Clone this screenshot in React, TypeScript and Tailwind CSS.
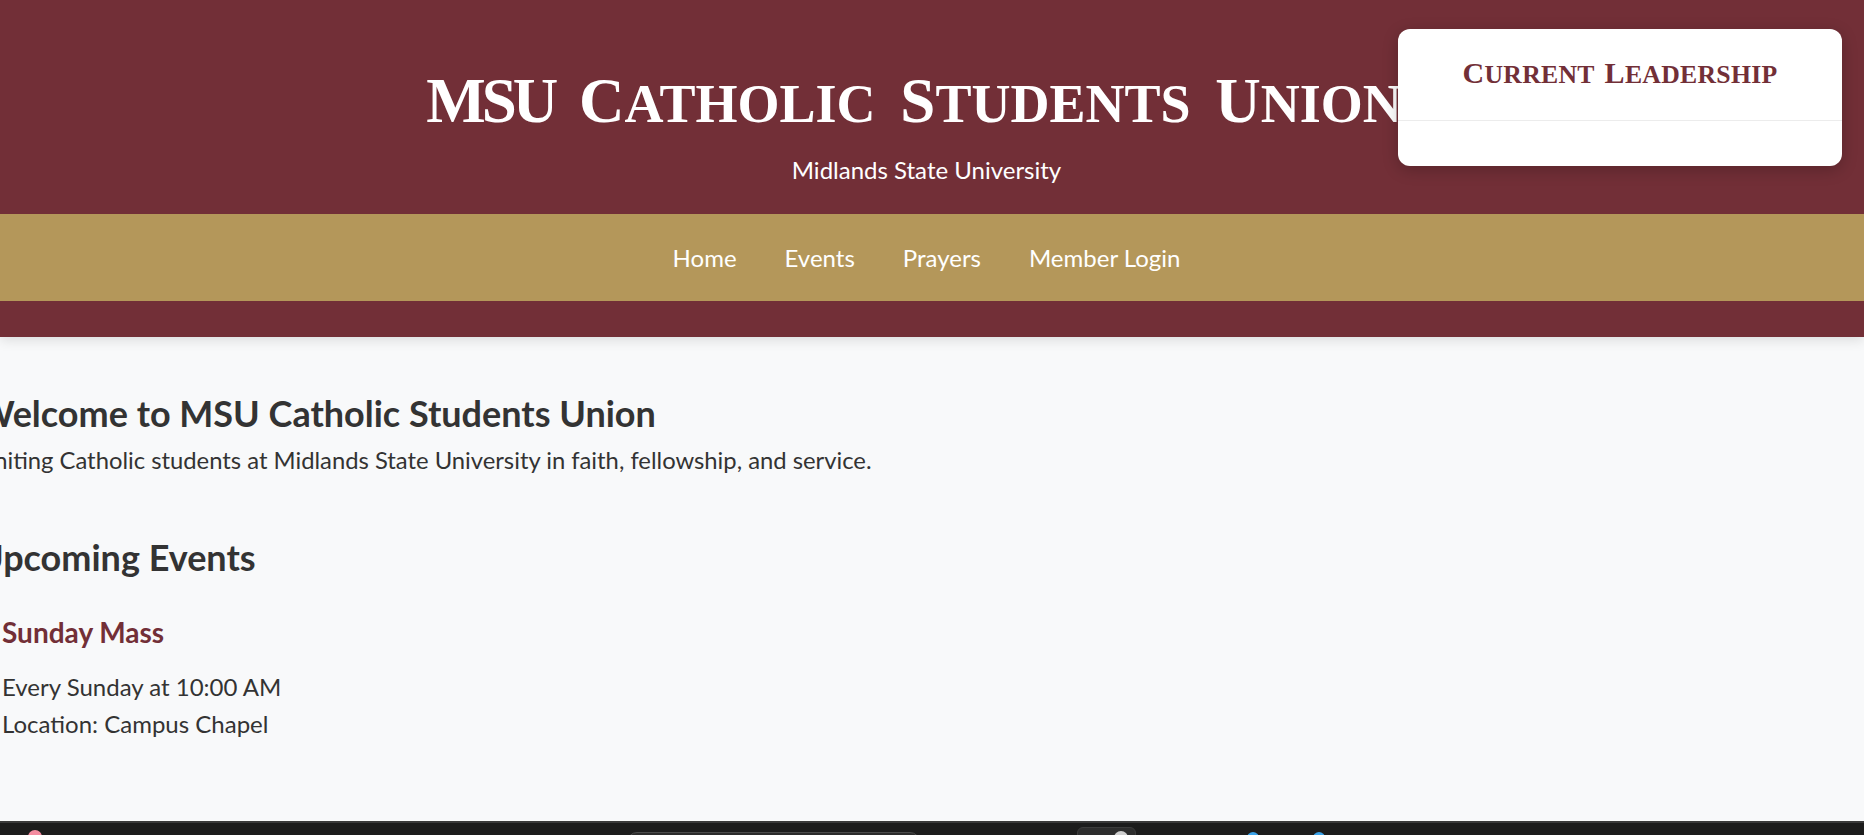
import React from 'react'

const navLinks = ['Home', 'Events', 'Prayers', 'Member Login']

function Word({ first, rest, restClass }: { first: string; rest: string; restClass: string }) {
  return (
    <span>
      {first}
      <span className={restClass}>{rest}</span>
    </span>
  )
}

function Header() {
  return (
    <header className="relative z-10 bg-[#722f37] pt-[65px] pb-[36px] shadow-[0_3px_12px_rgba(0,0,0,0.12)]">
      <div className="flex flex-col items-center pr-[11px]">
        <h1 className="mr-[25px] h-[72px] whitespace-nowrap font-['Liberation_Serif',serif] text-[63px] font-bold leading-[72px] text-white [word-spacing:9px]">
          <span className="tracking-[-4px]">MSU</span>{' '}
          <Word first="C" rest="atholic" restClass="text-[54px] uppercase leading-none" />{' '}
          <Word first="S" rest="tudents" restClass="text-[54px] uppercase leading-none" />{' '}
          <Word first="U" rest="nion" restClass="text-[54px] uppercase leading-none" />
        </h1>
        <p className="mt-[19px] font-['Lato',sans-serif] text-[24px] leading-[28px] text-white">
          Midlands State University
        </p>
      </div>
      <nav className="mt-[30px] flex h-[87px] items-center justify-center gap-[48px] bg-[#b4975a] pr-[11px]">
        {navLinks.map((l) => (
          <a key={l} href="#" className="font-['Lato',sans-serif] text-[24px] leading-[28px] text-white">
            {l}
          </a>
        ))}
      </nav>
    </header>
  )
}

function LeadershipCard() {
  return (
    <div className="absolute top-[29px] right-[22px] z-20 h-[137px] w-[444px] overflow-hidden rounded-[12px] bg-white shadow-[0_4px_16px_rgba(0,0,0,0.22)]">
      <div className="h-[92px] border-b border-[#ececec] pt-[27px] text-center">
        <h3 className="font-['Liberation_Serif',serif] text-[30px] font-bold leading-[34px] tracking-[0.3px] text-[#722f37] [word-spacing:2px]">
          <Word first="C" rest="urrent" restClass="text-[25.7px] uppercase leading-none" />{' '}
          <Word first="L" rest="eadership" restClass="text-[25.7px] uppercase leading-none" />
        </h3>
      </div>
    </div>
  )
}

function Taskbar() {
  return (
    <div className="relative h-[14px] shrink-0 overflow-hidden border-t-2 border-[#3a3a3a] bg-[#1c1c1c]">
      <span className="absolute top-[7px] left-[28px] h-[14px] w-[14px] rounded-full bg-[#f48ca0]" />
      <span className="absolute top-[9px] left-[627px] h-[20px] w-[293px] rounded-[10px] border border-[#4a4a4a] bg-[#2b2b2b]" />
      <span className="absolute top-[4px] left-[1077px] h-[30px] w-[59px] rounded-[6px] border border-[#3c3c3c] bg-[#2d2d2d]" />
      <span className="absolute top-[8px] left-[1114px] h-[14px] w-[14px] rounded-full bg-[#cfcfcf]" />
      <span className="absolute top-[9px] left-[1247px] h-[12px] w-[12px] rounded-full bg-[#3aa3ea]" />
      <span className="absolute top-[9px] left-[1313px] h-[12px] w-[12px] rounded-full bg-[#3aa3ea]" />
    </div>
  )
}

export default function App() {
  return (
    <div className="relative flex h-[835px] flex-col overflow-hidden bg-[#f8f9fa] font-['Lato',sans-serif] text-[#333]">
      <Header />
      <LeadershipCard />
      <main className="flex-1 overflow-hidden pt-[55px]">
        <div className="ml-[-23px]">
          <section>
            <h2 className="text-[36px] font-bold leading-[43px] text-[#333]">
              Welcome to MSU Catholic Students Union
            </h2>
            <p className="mt-[9px] text-[23.8px] leading-[32px]">
              Uniting Catholic students at Midlands State University in faith, fellowship, and service.
            </p>
          </section>
          <section className="mt-[60px]">
            <h2 className="text-[36px] font-bold leading-[43px] text-[#333]">Upcoming Events</h2>
            <div className="mt-[36px] pl-[25px]">
              <h3 className="text-[28px] font-bold leading-[34px] text-[#722f37]">Sunday Mass</h3>
              <div className="mt-[19px] text-[24px] leading-[37px]">
                <p>Every Sunday at 10:00 AM</p>
                <p>Location: Campus Chapel</p>
              </div>
            </div>
          </section>
        </div>
      </main>
      <Taskbar />
    </div>
  )
}
